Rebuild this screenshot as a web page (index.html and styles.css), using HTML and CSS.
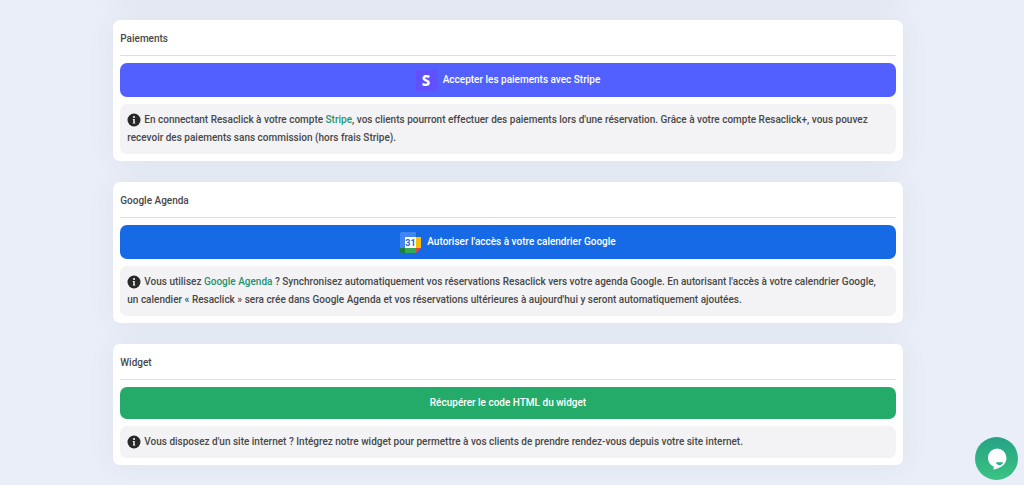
FILE: index.html
```html
<!DOCTYPE html>
<html lang="fr">
<head>
<meta charset="utf-8">
<meta name="viewport" content="width=device-width, initial-scale=1">
<title>Resaclick</title>
<link rel="stylesheet" href="styles.css">
</head>
<body>
<svg class="defs" aria-hidden="true">
  <symbol id="info" viewBox="0 0 14 14">
    <circle cx="7" cy="7" r="6.5" fill="#282828"/>
    <circle cx="7" cy="4" r="1" fill="#fff"/>
    <path d="M5.8 6h1.9v3.7h.6v.8H5.8v-.8h.5V6.8h-.5z" fill="#fff"/>
  </symbol>
</svg>
<main class="page">
  <div class="card card-previous"></div>
  <section class="card">
    <h2 class="card-title">Paiements</h2>
    <button class="action stripe" type="button">
      <svg class="brand" viewBox="0 0 21 21" aria-hidden="true">
        <rect width="21" height="21" fill="#6050ff"/>
        <text class="initial" x="10" y="16" text-anchor="middle">S</text>
      </svg>
      Accepter les paiements avec Stripe
    </button>
    <p class="note"><svg class="info" role="img" aria-label="Information"><use href="#info"/></svg>En connectant Resaclick à votre compte <a href="#stripe">Stripe</a>, vos clients pourront effectuer des paiements lors d'une réservation. Grâce à votre compte Resaclick+, vous pouvez recevoir des paiements sans commission (hors frais Stripe).</p>
  </section>
  <section class="card">
    <h2 class="card-title">Google Agenda</h2>
    <button class="action google" type="button">
      <svg class="brand" viewBox="0 0 21 21" aria-hidden="true">
        <path d="M1.5 0H16v5H5v11H0V1.5Q0 0 1.5 0z" fill="#4285f4"/>
        <path d="M16 0h3.5Q21 0 21 1.5V5h-5z" fill="#1967d2"/>
        <path d="M16 5h5v11h-5z" fill="#fbbc04"/>
        <path d="M5 16h11v5H5z" fill="#34a853"/>
        <path d="M0 16h5v5H1.5Q0 21 0 19.500z" fill="#188038"/>
        <path d="M16 16h5l-5 5z" fill="#ea4335"/>
        <path d="M5 5h11v11H5z" fill="#fff"/>
        <text class="day" x="10.500" y="14" text-anchor="middle">31</text>
      </svg>
      Autoriser l'accès à votre calendrier Google
    </button>
    <p class="note"><svg class="info" role="img" aria-label="Information"><use href="#info"/></svg>Vous utilisez <a href="#agenda">Google Agenda</a> ? Synchronisez automatiquement vos réservations Resaclick vers votre agenda Google. En autorisant l'accès à votre calendrier Google, un calendier « Resaclick » sera crée dans Google Agenda et vos réservations ultérieures à aujourd'hui y seront automatiquement ajoutées.</p>
  </section>
  <section class="card">
    <h2 class="card-title">Widget</h2>
    <button class="action widget" type="button">Récupérer le code HTML du widget</button>
    <p class="note"><svg class="info" role="img" aria-label="Information"><use href="#info"/></svg>Vous disposez d'un site internet ? Intégrez notre widget pour permettre à vos clients de prendre rendez-vous depuis votre site internet.</p>
  </section>
</main>
<button class="chat" type="button" aria-label="Ouvrir le chat">
  <svg class="chat-icon" viewBox="0 0 22 22" aria-hidden="true">
    <path d="M11 .5a9.500 9.500 0 0 1 9.500 9.500c0 5-4 8.700-8.500 10.200l-4.500 1.600.3-3A9.500 9.500 0 0 1 11 .5z" fill="#fff"/>
    <path d="M10 14.200h7q-.6 2.800-3.500 2.800T10 14.200z" fill="#2eae86"/>
  </svg>
</button>
</body>
</html>
```
FILE: styles.css
```css
* { box-sizing: border-box; }
body {
  margin: 0;
  padding-right: 8px;
  min-height: 100vh;
  overflow: hidden;
  background: #eaeef8;
  color: #484848;
  font: 500 10px/18px Roboto, sans-serif;
}
.defs { position: absolute; width: 0; height: 0; }
.page {
  display: flex;
  flex-direction: column;
  gap: 21px;
  width: 77.7%;
  margin: 0 auto;
}
.card {
  display: flex;
  flex-direction: column;
  gap: 7px;
  padding: 7px;
  border-radius: 7px;
  background: #fff;
  box-shadow: 0 0 28px rgba(60, 70, 90, 0.07);
}
.card-previous { height: 100px; margin-top: -101px; }
.card-title {
  margin: 0;
  padding: 3px 0 7px;
  border-bottom: 1px solid #dedede;
  font: inherit;
}
.action {
  display: flex;
  align-items: center;
  justify-content: center;
  gap: 6px;
  min-height: 32px;
  padding: 6px;
  border: 0;
  border-radius: 7px;
  color: #fff;
  font: inherit;
  cursor: pointer;
}
.stripe { min-height: 34px; background: #5260ff; }
.google { min-height: 34px; background: #176ae6; }
.widget { background: #25ab69; }
.brand { width: 21px; height: 21px; }
.initial { fill: #fff; font: 800 15px "Noto Sans", sans-serif; }
.day { fill: #1967d2; font: 700 9px Roboto, sans-serif; }
.note {
  margin: 0;
  padding: 7px 16px 7px 7px;
  border-radius: 7px;
  background: #f3f3f5;
}
.note a { color: #239373; text-decoration: none; }
.info {
  width: 14px;
  height: 14px;
  margin-right: 3px;
  vertical-align: -4px;
}
.chat {
  position: fixed;
  right: 6px;
  bottom: 5px;
  display: grid;
  place-items: center;
  width: 43px;
  height: 43px;
  padding: 0;
  border: 0;
  border-radius: 50%;
  background: linear-gradient(#25a384, #3bc383);
  cursor: pointer;
}
.chat-icon { width: 22px; height: 22px; }
```
